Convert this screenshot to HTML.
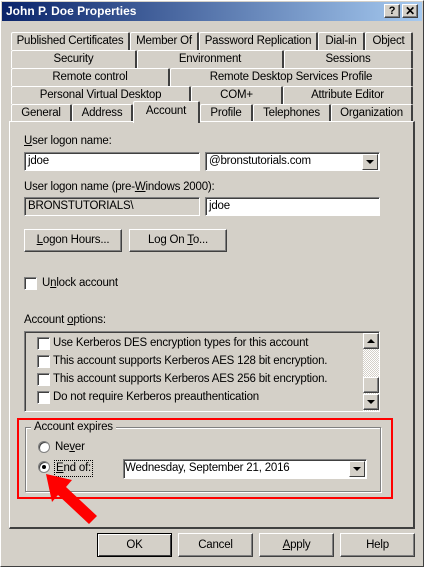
<!DOCTYPE html>
<html><head><style>
*{box-sizing:border-box;margin:0;padding:0}
body{width:424px;height:567px;background:#d4d0c8;font-family:"Liberation Sans",sans-serif;font-size:11.5px;letter-spacing:-0.2px;color:#000;position:relative;overflow:hidden}
.a{position:absolute}
.tab{position:absolute;height:18px;border-top:1px solid #fff;border-left:1px solid #fff;border-right:2px solid #404040;text-align:center;line-height:17px;background:#d4d0c8;border-radius:2px 2px 0 0;white-space:nowrap}
.in{position:absolute;background:#fff;border-top:1px solid #808080;border-left:1px solid #808080;border-right:1px solid #fff;border-bottom:1px solid #fff;box-shadow:inset 1px 1px 0 #404040;padding-left:3px;line-height:17px}
.btn{position:absolute;border-top:1px solid #fff;border-left:1px solid #fff;border-right:1px solid #404040;border-bottom:1px solid #404040;box-shadow:inset -1px -1px 0 #808080;text-align:center;background:#d4d0c8}
.cb{position:absolute;width:13px;height:13px;background:#fff;border-top:1px solid #808080;border-left:1px solid #808080;border-right:1px solid #fff;border-bottom:1px solid #fff;box-shadow:inset 1px 1px 0 #404040}
.dd{position:absolute;width:16px;height:16px;top:1px;right:1px;background:#d4d0c8;border-top:1px solid #fff;border-left:1px solid #fff;border-right:1px solid #404040;border-bottom:1px solid #404040}
.dd:after{content:"";position:absolute;left:3px;top:5px;border-left:4px solid transparent;border-right:4px solid transparent;border-top:4px solid #000}
u{text-decoration:underline}
</style></head><body>
<div class="a" style="left:0;top:0;width:424px;height:567px;border:1px solid #fff;border-right-color:#404040;border-bottom-color:#404040"></div>
<div class="a" style="left:2px;top:2px;width:420px;height:19px;background:linear-gradient(90deg,#0a246a,#a6caf0);color:#fff;font-weight:bold;font-size:12px;letter-spacing:0;line-height:19px;padding-left:4px">John P. Doe Properties</div>
<div class="btn" style="left:384px;top:4px;width:16px;height:14px;font-weight:bold;font-size:11px;line-height:12px">?</div>
<div class="btn" style="left:402px;top:4px;width:16px;height:14px;font-weight:bold;font-size:12px;line-height:12px">✕</div>

<div class="tab" style="left:11px;top:32px;width:119px">Published Certificates</div>
<div class="tab" style="left:130px;top:32px;width:69px">Member Of</div>
<div class="tab" style="left:199px;top:32px;width:119px">Password Replication</div>
<div class="tab" style="left:318px;top:32px;width:47px">Dial-in</div>
<div class="tab" style="left:365px;top:32px;width:48px">Object</div>
<div class="tab" style="left:11px;top:50px;width:126px">Security</div>
<div class="tab" style="left:137px;top:50px;width:147px">Environment</div>
<div class="tab" style="left:284px;top:50px;width:129px">Sessions</div>
<div class="tab" style="left:11px;top:68px;width:159px">Remote control</div>
<div class="tab" style="left:170px;top:68px;width:243px">Remote Desktop Services Profile</div>
<div class="tab" style="left:11px;top:86px;width:180px">Personal Virtual Desktop</div>
<div class="tab" style="left:191px;top:86px;width:92px">COM+</div>
<div class="tab" style="left:283px;top:86px;width:130px">Attribute Editor</div>
<div class="tab" style="left:11px;top:104px;width:61px">General</div>
<div class="tab" style="left:72px;top:104px;width:61px">Address</div>
<div class="tab" style="left:200px;top:104px;width:53px">Profile</div>
<div class="tab" style="left:253px;top:104px;width:78px">Telephones</div>
<div class="tab" style="left:331px;top:104px;width:82px">Organization</div>
<div class="a" style="left:9px;top:121px;width:406px;height:408px;border-top:1px solid #fff;border-left:1px solid #fff;border-right:2px solid #404040;border-bottom:2px solid #404040"></div>
<div class="tab" style="left:133px;top:101px;width:67px;height:22px;border-bottom:none;z-index:2;line-height:18px">Account</div>

<div class="a" style="left:24px;top:135px"><u>U</u>ser logon name:</div>
<div class="in" style="left:24px;top:152px;width:176px;height:19px">jdoe</div>
<div class="in" style="left:205px;top:152px;width:175px;height:19px">@bronstutorials.com<div class="dd"></div></div>
<div class="a" style="left:24px;top:181px">User logon name (pre-<u>W</u>indows 2000):</div>
<div class="in" style="left:24px;top:197px;width:176px;height:19px;background:#d4d0c8">BRONSTUTORIALS\</div>
<div class="in" style="left:205px;top:197px;width:175px;height:19px">jdoe</div>
<div class="btn" style="left:24px;top:229px;width:98px;height:23px;line-height:21px"><u>L</u>ogon Hours...</div>
<div class="btn" style="left:129px;top:229px;width:98px;height:23px;line-height:21px">Log On <u>T</u>o...</div>
<div class="cb" style="left:24px;top:277px"></div>
<div class="a" style="left:42px;top:277px">U<u>n</u>lock account</div>
<div class="a" style="left:24px;top:314px">Account <u>o</u>ptions:</div>

<div class="a" style="left:24px;top:331px;width:356px;height:81px;border-top:1px solid #808080;border-left:1px solid #808080;border-right:1px solid #fff;border-bottom:1px solid #fff;box-shadow:inset 1px 1px 0 #404040"></div>
<div class="cb" style="left:37px;top:337px"></div><div class="a" style="left:53px;top:337px">Use Kerberos DES encryption types for this account</div>
<div class="cb" style="left:37px;top:355px"></div><div class="a" style="left:53px;top:355px">This account supports Kerberos AES 128 bit encryption.</div>
<div class="cb" style="left:37px;top:373px"></div><div class="a" style="left:53px;top:373px">This account supports Kerberos AES 256 bit encryption.</div>
<div class="cb" style="left:37px;top:391px"></div><div class="a" style="left:53px;top:391px">Do not require Kerberos preauthentication</div>
<div class="a" style="left:363px;top:333px;width:16px;height:78px;background:repeating-conic-gradient(#fff 0 25%,#d4d0c8 0 50%) 0 0/2px 2px"></div>
<div class="btn" style="left:363px;top:333px;width:16px;height:16px"><div class="a" style="left:3px;top:5px;border-left:4px solid transparent;border-right:4px solid transparent;border-bottom:4px solid #000"></div></div>
<div class="btn" style="left:363px;top:377px;width:16px;height:16px"></div>
<div class="btn" style="left:363px;top:394px;width:16px;height:16px"><div class="a" style="left:3px;top:5px;border-left:4px solid transparent;border-right:4px solid transparent;border-top:4px solid #000"></div></div>

<div class="a" style="left:25px;top:427px;width:356px;height:65px;border:1px solid #808080;box-shadow:1px 1px 0 #fff,inset 1px 1px 0 #fff"></div>
<div class="a" style="left:31px;top:421px;background:#d4d0c8;padding:0 3px">Account expires</div>
<div class="a" style="left:38px;top:441px;width:12px;height:12px;border-radius:50%;background:#fff;border:1px solid #808080;box-shadow:inset 1px 1px 0 #404040"></div>
<div class="a" style="left:55px;top:441px">Ne<u>v</u>er</div>
<div class="a" style="left:38px;top:461px;width:12px;height:12px;border-radius:50%;background:#fff;border:1px solid #808080;box-shadow:inset 1px 1px 0 #404040"><div class="a" style="left:3px;top:3px;width:4px;height:4px;border-radius:50%;background:#000"></div></div>
<div class="a" style="left:54px;top:460px;border:1px dotted #000;padding:0 1px;line-height:15px"><u>E</u>nd of:</div>
<div class="in" style="left:123px;top:459px;width:244px;height:20px;padding-left:1px">Wednesday, September 21, 2016<div class="dd"></div></div>
<div class="a" style="left:17px;top:418px;width:376px;height:81px;border:2px solid #f00"></div>
<svg class="a" style="left:0;top:0" width="424" height="567"><polygon points="46,474 72,480 66,487 97,516 89,524 58,495 52,502" fill="#f00"/></svg>

<div class="btn" style="left:97px;top:533px;width:75px;height:24px;line-height:22px;border:1px solid #000;box-shadow:inset 1px 1px 0 #fff,inset -1px -1px 0 #404040">OK</div>
<div class="btn" style="left:178px;top:533px;width:75px;height:24px;line-height:22px">Cancel</div>
<div class="btn" style="left:259px;top:533px;width:75px;height:24px;line-height:22px"><u>A</u>pply</div>
<div class="btn" style="left:340px;top:533px;width:75px;height:24px;line-height:22px">Help</div>
</body></html>
